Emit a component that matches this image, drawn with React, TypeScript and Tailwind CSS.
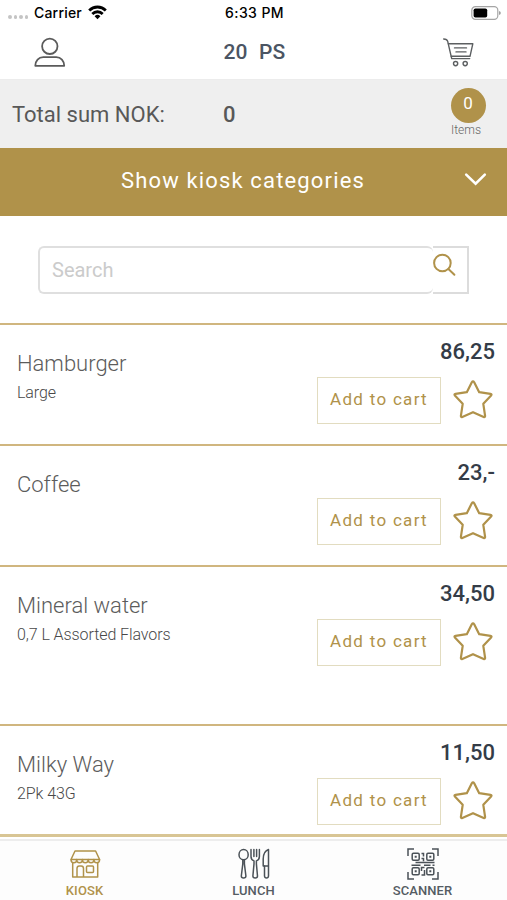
import type { ReactNode } from 'react';

type Product = {
  name: string;
  info: string;
  price: string;
  height: string;
};

const products: Product[] = [
  { name: 'Hamburger', info: 'Large', price: '86,25', height: 'h-[121px]' },
  { name: 'Coffee', info: '', price: '23,-', height: 'h-[121px]' },
  { name: 'Mineral water', info: '0,7 L Assorted Flavors', price: '34,50', height: 'h-[159px]' },
  { name: 'Milky Way', info: '2Pk 43G', price: '11,50', height: 'h-[110px]' },
];

function StatusBar() {
  return (
    <div className="flex h-[26px] items-center justify-between pr-[6px] pb-[1px] pl-2 font-['Inter',sans-serif] text-[14px] font-medium text-black">
      <div className="flex w-[149px] items-center">
        <div className="mt-[9px] flex gap-[2px]">
          <i className="size-[3.5px] rounded-full bg-[#c4c4c4]" />
          <i className="size-[3.5px] rounded-full bg-[#c4c4c4]" />
          <i className="size-[3.5px] rounded-full bg-[#c4c4c4]" />
          <i className="size-[3.5px] rounded-full bg-[#c4c4c4]" />
        </div>
        <span className="ml-[6px] tracking-[0.2px]">Carrier</span>
        <svg className="ml-[6px] shrink-0" width="19" height="15" viewBox="0 0 19 15" fill="none" stroke="#000" strokeWidth="2.8">
          <path d="M1.2 5.4a11.8 11.8 0 0 1 16.6 0" />
          <path d="M4.3 8.9a7.4 7.4 0 0 1 10.4 0" />
          <path d="M9.5 14.2 6.6 11.3a4.1 4.1 0 0 1 5.8 0z" fill="#000" stroke="none" />
        </svg>
      </div>
      <span className="tracking-[0.4px]">6:33 PM</span>
      <div className="flex w-[149px] justify-end">
        <svg width="30" height="14" viewBox="0 0 30 14" fill="none">
          <rect x=".8" y=".7" width="26" height="12.6" rx="3.6" stroke="#a5a5a5" strokeWidth="1.2" />
          <rect x="2.6" y="2.4" width="13.6" height="9.2" rx="1.8" fill="#000" />
          <path d="M28.2 5v4q1.5-.7 1.5-2t-1.5-2z" fill="#8a8a8a" />
        </svg>
      </div>
    </div>
  );
}

function Header() {
  return (
    <header className="flex h-[54px] items-start justify-between border-b border-[#ececec] pr-[32px] pl-[33px]">
      <svg className="mt-[11px]" width="34" height="32" viewBox="0 0 34 32" fill="none" stroke="#5b5b5b" strokeWidth="1.8">
        <circle cx="16.8" cy="9.3" r="7.7" />
        <path d="M2.3 28.8c0-5.2 3.4-8.6 7.9-8.6h13.1c4.5 0 7.9 3.4 7.9 8.6z" strokeLinejoin="round" />
      </svg>
      <h1 className="mt-[12px] text-[21px] leading-[28px] font-medium tracking-[0.3px] whitespace-pre text-[#4b5563]">20  PS</h1>
      <svg className="mt-[11px]" width="33" height="32" viewBox="0 0 33 32" fill="none" stroke="#5c5f61" strokeWidth="1.4" strokeLinecap="round" strokeLinejoin="round">
        <path d="M1.7 2q3.4.1 4 2.4l4 17.2h18" />
        <path d="M6.4 6.8h24.4l-2.8 12.5H9.2" />
        <path d="M12.5 10.9h12M14 14.9h10" />
        <circle cx="13.6" cy="26.6" r="2.1" />
        <circle cx="23.2" cy="26.6" r="2.1" />
      </svg>
    </header>
  );
}

function Summary() {
  return (
    <section className="flex h-[68px] bg-[#efefef] pl-3 text-[#585858]">
      <span className="mt-[20px] w-[211px] text-[22px] leading-[30px]">Total sum NOK:</span>
      <span className="mt-[20px] text-[22px] leading-[30px] font-medium">0</span>
      <div className="mt-[8px] mr-[21px] ml-auto flex w-[36px] flex-col items-center">
        <span className="flex h-[35px] w-[35px] shrink-0 items-center justify-center rounded-full bg-[#b0924a] pb-[3px] text-[17px] text-white">0</span>
        <span className="-ml-[4px] text-[12px] leading-[14px] font-light text-[#666]">Items</span>
      </div>
    </section>
  );
}

function CategoryToggle() {
  return (
    <button className="flex h-[68px] w-full items-start bg-[#b0924a] pt-[18px] pl-[121px] text-white">
      <span className="text-[22px] leading-[30px] tracking-[1.15px] whitespace-nowrap">Show kiosk categories</span>
      <svg className="mt-[5px] mr-[20px] ml-auto" width="23" height="16" viewBox="0 0 23 16" fill="none" stroke="#fff" strokeWidth="2.6" strokeLinecap="round" strokeLinejoin="miter">
        <path d="m2.2 3.6 9.4 9 9.2-9" />
      </svg>
    </button>
  );
}

function SearchField() {
  return (
    <div className="flex h-[107px] pt-[30px] pl-[38px]">
      <div className="flex h-[48px] w-[395px] items-center rounded-[6px] border-2 border-r-0 border-[#dfdfdf] pl-[12px] text-[20px] text-[#cbcbcb]">
        Search
      </div>
      <div className="h-[48px] w-[36px] border-2 border-l-0 border-[#dcdcdc]">
        <svg className="mt-[5px] -ml-[1px]" width="25" height="25" viewBox="0 0 25 25" fill="none" stroke="#b0924a" strokeWidth="2" strokeLinecap="round">
          <circle cx="10.4" cy="10" r="8.3" />
          <path d="m16.4 16 6 5.8" />
        </svg>
      </div>
    </div>
  );
}

function Star() {
  return (
    <svg width="40" height="40" viewBox="0 0 40 40" fill="none" stroke="#b0924a" strokeWidth="2.2" strokeLinejoin="round">
      <path d="M18.8 2.3q1.2-1.8 2.4 0l5 9.9 11.3 1.7q1.7.3.6 1.6l-7.8 8.3 1.8 12.1q.1 1.6-1.4 1L20 32.2 9.3 36.9q-1.5.6-1.4-1l1.8-12.1-7.8-8.3q-1.1-1.3.6-1.6l11.3-1.7z" />
    </svg>
  );
}

function ProductRow({ product }: { product: Product }) {
  return (
    <li className={`flex justify-between border-t-2 border-[#d0b67f] pr-[11px] pl-[17px] ${product.height}`}>
      <div className="pt-[25px] text-[#5c5c5c]">
        <h2 className="text-[22px] leading-[28px] font-light">{product.name}</h2>
        <p className="mt-[5px] text-[16px] leading-[20px] font-light tracking-[-0.08px] text-[#484848]">{product.info}</p>
      </div>
      <div className="flex flex-col items-end pt-[13px]">
        <span className="mr-[1px] text-[22px] leading-[28px] font-medium text-[#343c47]">{product.price}</span>
        <div className="mt-[11px] flex items-start gap-[12px]">
          <button className="h-[47px] w-[124px] border border-[#e2dcc0] pb-[2px] text-[17px] tracking-[1.3px] whitespace-nowrap text-[#b0924a]">
            Add to cart
          </button>
          <div className="mt-[3px] mr-[4px] w-[39px]">
            <Star />
          </div>
        </div>
      </div>
    </li>
  );
}

function KioskIcon() {
  return (
    <svg width="32" height="30" viewBox="0 0 32 30" fill="none" stroke="#b0924a" strokeWidth="1.5" strokeLinejoin="round">
      <path d="M6 2h20.600l4 8.500H2z" />
      <path d="M2 10.500c0 4.400 5.700 4.400 5.700 0 0 4.400 5.700 4.400 5.700 0 0 4.400 5.800 4.400 5.800 0 0 4.400 5.700 4.400 5.700 0 0 4.400 5.700 4.400 5.700 0" />
      <path d="M3.700 13.800V28h25V13.800" />
      <path d="M8 28v-8.500q0-2.600 2.300-2.600h1.900q2.300 0 2.300 2.600V28" />
      <rect x="17.500" y="16.900" width="7" height="6.600" rx="1" />
    </svg>
  );
}

function LunchIcon() {
  return (
    <svg width="34" height="32" viewBox="0 0 34 32" fill="none" stroke="#4b5258" strokeWidth="1.5" strokeLinejoin="round" strokeLinecap="round">
      <ellipse cx="6.600" cy="6.700" rx="4.600" ry="5.100" />
      <path d="M5.800 11.800v4L4.300 28q0 2 2.300 2t2.300-2L7.400 15.800v-4" />
      <path d="M14 1.500v7q0 3.300 3 4.400v3L15.900 28q0 2 2.300 2t2.300-2l-1.100-12.100v-3q3-1.100 3-4.400v-7" />
      <path d="M16.900 1.500v7M19.600 1.500v7" />
      <path d="M31.500 28q-.2 2-2 2t-2-2V18h-1.300v-7q0-7.500 5.300-9.500z" />
      <path d="M27.500 18h3.800" />
    </svg>
  );
}

function ScannerIcon() {
  return (
    <svg width="32" height="32" viewBox="0 0 32 32" fill="none" stroke="#4b5258" strokeWidth="1.5">
      <path d="M1 8V1h6M25 1h6v7M31 24v7h-6M7 31H1v-7" />
      <rect x="5.200" y="5.200" width="7" height="7" rx="1.200" />
      <rect x="19.800" y="5.200" width="7" height="7" rx="1.200" />
      <rect x="5.200" y="19.800" width="7" height="7" rx="1.200" />
      <rect x="19.800" y="19.800" width="7" height="7" rx="1.200" />
      <path d="M7.700 8.700h2M22.300 8.700h2M7.700 23.300h2M22.300 23.300h2" strokeWidth="2" />
      <path d="M14.500 5.500h2v3M14.500 10.500h2v2.700M8.500 14.600h8M4.500 17.200h9M16.500 14.600h11M17 17.200h6.500M25.500 17.200h2M17.500 19.500h-3v3.500M17.500 22v5h-3" />
    </svg>
  );
}

function Tab({ label, active, children }: { label: string; active?: boolean; children: ReactNode }) {
  return (
    <div className="flex w-1/3 flex-col items-center">
      <div className="flex h-[35px] items-center">{children}</div>
      <span className={`mt-[3px] text-[13px] leading-[14px] font-medium tracking-[0.1px] ${active ? 'text-[#b0924a]' : 'text-[#555c63]'}`}>
        {label}
      </span>
    </div>
  );
}

export default function App() {
  return (
    <main className="flex h-[900px] w-[507px] flex-col overflow-hidden bg-white font-['Roboto',sans-serif]">
      <StatusBar />
      <Header />
      <Summary />
      <CategoryToggle />
      <SearchField />
      <ul className="border-b-[3px] border-[#d8c594]">
        {products.map((product) => (
          <ProductRow key={product.name} product={product} />
        ))}
      </ul>
      <nav className="mt-[2px] flex grow border-t-2 border-[#ededed] bg-[#fdfdfd] pt-[5px]">
        <Tab label="KIOSK" active>
          <KioskIcon />
        </Tab>
        <Tab label="LUNCH">
          <LunchIcon />
        </Tab>
        <Tab label="SCANNER">
          <ScannerIcon />
        </Tab>
      </nav>
    </main>
  );
}
